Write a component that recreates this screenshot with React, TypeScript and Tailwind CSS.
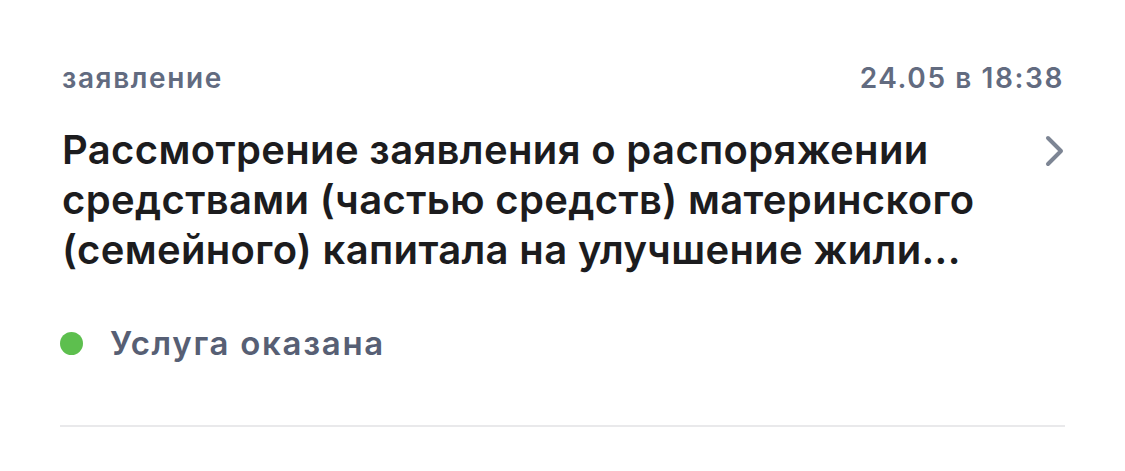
import React from 'react';

export default function App() {
    return (
        <div className="min-h-screen bg-white px-[62px] pt-[61px] font-['Inter',sans-serif] antialiased">
            {/* Header row */}
            <div className="flex items-center justify-between text-[28px] font-semibold leading-[34px] tracking-[1.6px] text-[#626b80]">
                <span>заявление</span>
                <span className="-mr-[1px]">24.05 в 18:38</span>
            </div>

            {/* Title */}
            <div className="mt-[30px] flex items-start justify-between">
                <h2 className="text-[40px] font-semibold leading-[50px] tracking-[0.35px] text-[#1c1c1e]">
                    Рассмотрение заявления о распоряжении
                    <br />
                    средствами (частью средств) материнского
                    <br />
                    (семейного) капитала на улучшение жили...
                </h2>
                <svg
                    width="20"
                    height="32"
                    viewBox="0 0 20 32"
                    fill="none"
                    className="mt-[10px] mr-[-2px] shrink-0"
                >
                    <path
                        d="M3 3 L16 16 L3 29"
                        stroke="#7d8594"
                        strokeWidth="4"
                        strokeLinecap="round"
                        strokeLinejoin="round"
                    />
                </svg>
            </div>

            {/* Status */}
            <div className="-ml-[2px] mt-[48px] flex items-center gap-[27px]">
                <span className="h-[23px] w-[23px] shrink-0 rounded-full bg-[#5dbf4e]" />
                <span className="text-[33px] font-semibold leading-[40px] tracking-[1.7px] text-[#575f74]">Услуга оказана</span>
            </div>

            {/* Divider */}
            <div className="-mx-[2px] mt-[62px] h-[2px] bg-[#e9e9eb]" />
        </div>
    );
}
